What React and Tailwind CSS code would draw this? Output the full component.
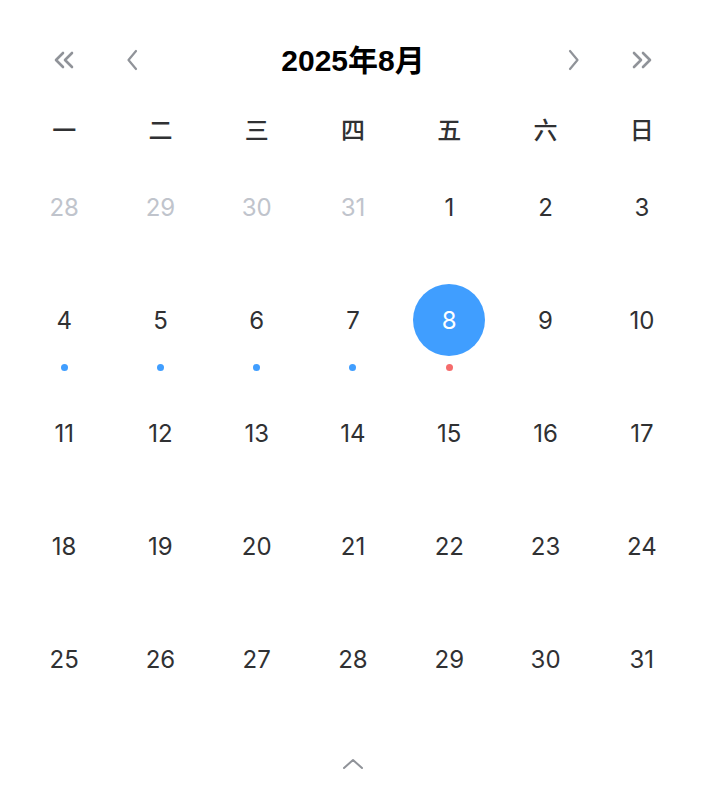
import React from 'react';

const font = { fontFamily: 'Inter, "Noto Sans CJK SC", sans-serif' };
const titleFont = { fontFamily: '"Liberation Sans", "Noto Sans CJK SC", sans-serif' };

const weekdays = ['一', '二', '三', '四', '五', '六', '日'];

// 2025年8月, Monday first
const days = [
  { d: 28, muted: true }, { d: 29, muted: true }, { d: 30, muted: true }, { d: 31, muted: true },
  { d: 1 }, { d: 2 }, { d: 3 },
  { d: 4, dot: 'blue' }, { d: 5, dot: 'blue' }, { d: 6, dot: 'blue' }, { d: 7, dot: 'blue' },
  { d: 8, selected: true, dot: 'red' }, { d: 9 }, { d: 10 },
  { d: 11 }, { d: 12 }, { d: 13 }, { d: 14 }, { d: 15 }, { d: 16 }, { d: 17 },
  { d: 18 }, { d: 19 }, { d: 20 }, { d: 21 }, { d: 22 }, { d: 23 }, { d: 24 },
  { d: 25 }, { d: 26 }, { d: 27 }, { d: 28 }, { d: 29 }, { d: 30 }, { d: 31 },
];

function Single({ flip }) {
  return (
    <svg width="12" height="22" viewBox="0 0 12 22" fill="none" stroke="currentColor" strokeWidth="2.2" strokeLinecap="round" strokeLinejoin="round" className={flip ? 'rotate-180' : ''}>
      <path d="M10 2 L2.5 11 L10 20" />
    </svg>
  );
}

function Double({ flip }) {
  return (
    <svg width="22" height="18" viewBox="0 0 22 18" fill="none" stroke="currentColor" strokeWidth="2.6" strokeLinecap="round" strokeLinejoin="round" className={flip ? 'rotate-180' : ''}>
      <path d="M10 2 L3 9 L10 16" />
      <path d="M19 2 L12 9 L19 16" />
    </svg>
  );
}

function DayCell({ day }) {
  const textColor = day.selected ? 'text-white' : day.muted ? 'text-[#c0c4cc]' : 'text-[#303133]';
  return (
    <div className="h-[113px] flex flex-col items-center">
      <div className={`w-[72px] h-[72px] rounded-full flex items-center justify-center text-[24px] ${textColor} ${day.selected ? 'bg-[#409eff]' : ''}`}>
        <span className="leading-none pt-[2px]">{day.d}</span>
      </div>
      {day.dot && (
        <div className={`mt-[8px] w-[7px] h-[7px] rounded-full ${day.dot === 'red' ? 'bg-[#f56c6c]' : 'bg-[#409eff]'}`} />
      )}
    </div>
  );
}

export default function App() {
  return (
    <div className="w-[706px] h-[812px] bg-white px-4 pt-[40px]" style={font}>
      <div className="h-[40px] flex items-center text-[#909399]">
        <button className="w-[96px] h-full flex items-center justify-center">
          <Double />
        </button>
        <button className="w-[40px] h-full flex items-center justify-center">
          <Single />
        </button>
        <div className="flex-1 text-center text-[30px] font-bold text-black" style={titleFont}>2025年8月</div>
        <button className="w-[40px] h-full flex items-center justify-center">
          <Single flip />
        </button>
        <button className="w-[96px] h-full flex items-center justify-center">
          <Double flip />
        </button>
      </div>

      <div className="mt-[31px] h-[40px] grid grid-cols-7 items-center text-[24px] font-medium text-[#303133]">
        {weekdays.map((w) => (
          <div key={w} className="text-center">{w}</div>
        ))}
      </div>

      <div className="mt-[20px] grid grid-cols-7">
        {days.map((day, i) => (
          <DayCell key={i} day={day} />
        ))}
      </div>

      <div className="mt-[16px] h-[24px] flex items-center justify-center text-[#909399]">
        <svg width="22" height="12" viewBox="0 0 22 12" fill="none" stroke="currentColor" strokeWidth="2" strokeLinecap="round" strokeLinejoin="round">
          <path d="M2 10 L11 2 L20 10" />
        </svg>
      </div>
    </div>
  );
}
